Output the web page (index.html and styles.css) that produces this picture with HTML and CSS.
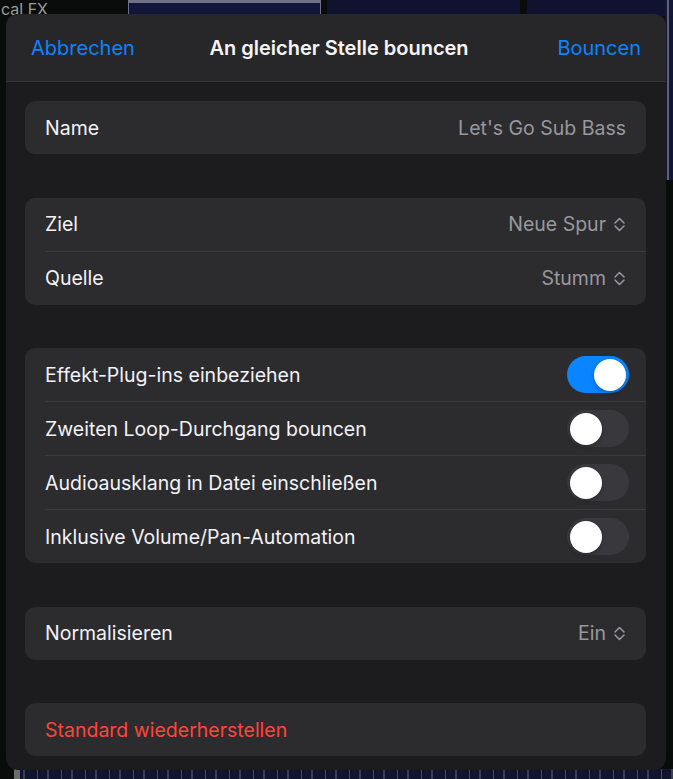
FILE: index.html
```html
<!DOCTYPE html>
<html lang="de">
<head>
  <meta charset="UTF-8">
  <title>An gleicher Stelle bouncen</title>
  <link rel="stylesheet" href="styles.css">
</head>
<body>

  <!-- App im Hintergrund -->
  <div class="backdrop">
    <div class="bg-label">cal FX</div>
    <div class="bg-region bg-region-a"></div>
    <div class="bg-region bg-region-b"></div>
    <div class="bg-region bg-region-c"></div>
    <div class="bg-side"></div>
    <div class="bg-wave"></div>
  </div>

  <div class="sheet">
    <header class="sheet-header">
      <span class="link">Abbrechen</span>
      <span class="title">An gleicher Stelle bouncen</span>
      <span class="link link-right">Bouncen</span>
    </header>

    <div class="sheet-body">
      <div class="group">
        <div class="row">
          <span class="label">Name</span>
          <span class="value">Let's Go Sub Bass</span>
        </div>
      </div>

      <div class="group">
        <div class="row">
          <span class="label">Ziel</span>
          <span class="value">Neue Spur <svg class="updown" viewBox="0 0 13 15"><path d="M2 6 L6.5 1.5 L11 6 M2 9 L6.5 13.5 L11 9"/></svg></span>
        </div>
        <div class="row">
          <span class="label">Quelle</span>
          <span class="value">Stumm <svg class="updown" viewBox="0 0 13 15"><path d="M2 6 L6.5 1.5 L11 6 M2 9 L6.5 13.5 L11 9"/></svg></span>
        </div>
      </div>

      <div class="group">
        <div class="row row-switch">
          <span class="label">Effekt-Plug-ins einbeziehen</span>
          <span class="switch on"><span class="knob"></span></span>
        </div>
        <div class="row row-switch">
          <span class="label">Zweiten Loop-Durchgang bouncen</span>
          <span class="switch"><span class="knob"></span></span>
        </div>
        <div class="row row-switch">
          <span class="label">Audioausklang in Datei einschließen</span>
          <span class="switch"><span class="knob"></span></span>
        </div>
        <div class="row row-switch">
          <span class="label">Inklusive Volume/Pan-Automation</span>
          <span class="switch"><span class="knob"></span></span>
        </div>
      </div>

      <div class="group">
        <div class="row">
          <span class="label">Normalisieren</span>
          <span class="value">Ein <svg class="updown" viewBox="0 0 13 15"><path d="M2 6 L6.5 1.5 L11 6 M2 9 L6.5 13.5 L11 9"/></svg></span>
        </div>
      </div>

      <div class="group">
        <div class="row">
          <span class="label danger">Standard wiederherstellen</span>
        </div>
      </div>
    </div>
  </div>

</body>
</html>
```

FILE: styles.css
```css
body {
  margin: 0;
  width: 673px;
  height: 779px;
  overflow: hidden;
  position: relative;
  background-color: #0a0c0b;
  font-family: 'Inter', 'Liberation Sans', sans-serif;
  color: #f2f2f7;
}

/* Hintergrund (Logic-Arbeitsbereich) */
.backdrop {
  position: absolute;
  inset: 0;
  z-index: 0;
}

.bg-label {
  position: absolute;
  left: 1px;
  top: 0;
  font-size: 16px;
  line-height: 18px;
  color: #9a9c98;
}

.bg-region {
  position: absolute;
  top: 0;
  height: 16px;
  background-color: #0f1330;
}

.bg-region-a {
  left: 128px;
  width: 193px;
  background-color: #12163a;
  border-top: 3px solid #6e7288;
  box-sizing: border-box;
  box-shadow: inset 1px 0 #6e7288, inset -1px 0 #6e7288;
}

.bg-region-b {
  left: 327px;
  width: 193px;
}

.bg-region-c {
  left: 527px;
  width: 146px;
}

.bg-side {
  position: absolute;
  right: 0;
  top: 0;
  width: 8px;
  height: 180px;
  background: linear-gradient(to right, #131735 0 2px, #5e6175 2px 4px, #131735 4px);
}

.bg-wave {
  position: absolute;
  left: 14px;
  right: 0;
  bottom: 0;
  height: 10px;
  background:
    linear-gradient(to right, #6a6c70 0 6px, transparent 6px),
    repeating-linear-gradient(90deg, #10142e 0 9px, #3c3f55 9px 11px, #10142e 11px 23px, #4a4d63 23px 24px);
}

/* Dialog */
.sheet {
  position: relative;
  z-index: 1;
  margin: 14px 0 0 6px;
  width: 660px;
  height: 756px;
  background-color: #1c1c1e;
  border-radius: 12px;
  overflow: hidden;
  display: flex;
  flex-direction: column;
}

.sheet-header {
  height: 67px;
  background-color: #272729;
  border-bottom: 1px solid #363638;
  display: grid;
  grid-template-columns: 1fr auto 1fr;
  align-items: center;
  padding: 0 25px;
  font-size: 20px;
}

.link {
  color: #0a84ff;
}

.link-right {
  justify-self: end;
}

.title {
  font-weight: 600;
  color: #f5f5f7;
  margin-left: 6px;
}

.sheet-body {
  display: flex;
  flex-direction: column;
  gap: 43.5px;
  padding: 19px 20px 0 19px;
}

.group {
  background-color: #2c2c2e;
  border-radius: 10px;
}

.row {
  height: 53px;
  display: flex;
  align-items: center;
  justify-content: space-between;
  padding: 0 20px;
  font-size: 19.5px;
}

.row + .row {
  border-top: 1px solid #3a3a3c;
  margin-left: 20px;
  padding-left: 0;
}

.row-switch {
  padding-right: 17px;
}

.value {
  color: #98989e;
  display: flex;
  align-items: center;
  gap: 7px;
}

.updown {
  width: 13px;
  height: 15px;
  fill: none;
  stroke: #98989e;
  stroke-width: 1.5;
  stroke-linecap: round;
  stroke-linejoin: round;
}

.danger {
  color: #ff453a;
}

.switch {
  width: 62px;
  height: 37px;
  border-radius: 19px;
  background-color: #39393d;
  display: flex;
  align-items: center;
  padding: 0 3px;
  box-sizing: border-box;
}

.switch.on {
  background-color: #0a84ff;
  justify-content: flex-end;
}

.knob {
  width: 32px;
  height: 32px;
  border-radius: 50%;
  background-color: #fff;
  box-shadow: 0 2px 4px rgba(0,0,0,0.25);
}
```
